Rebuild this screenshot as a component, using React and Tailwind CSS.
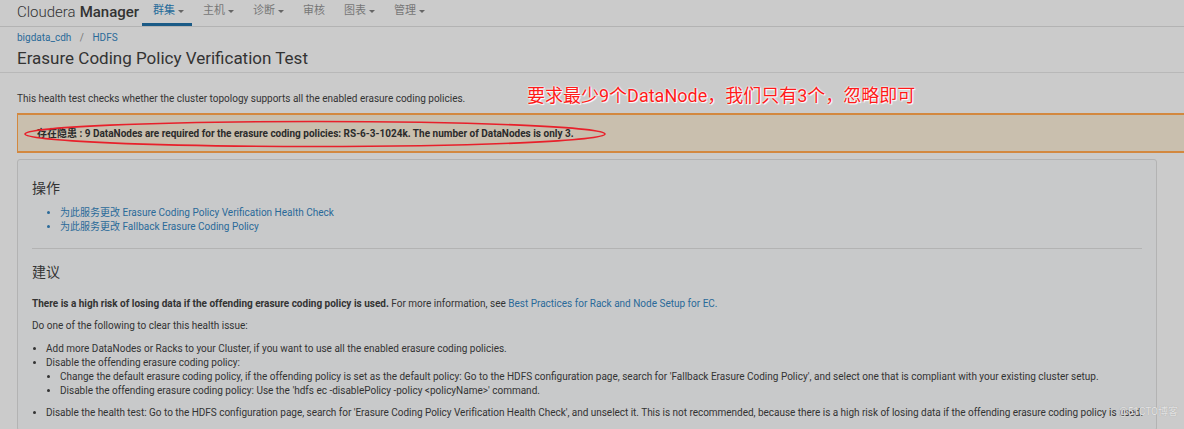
import React from "react";

const navItems = [
  { label: "群集", active: true, caret: true },
  { label: "主机", caret: true },
  { label: "诊断", caret: true },
  { label: "审核" },
  { label: "图表", caret: true },
  { label: "管理", caret: true },
];

const Caret = () => (
  <span className="ml-[3px] inline-block w-0 h-0 border-x-[3px] border-x-transparent border-t-[3px] border-t-[#666] align-middle" />
);

export default function App() {
  return (
    <div className="w-[1184px] h-[429px] overflow-hidden bg-[#cbcbcb] text-[#333] font-['Roboto','Noto_Sans_CJK_SC',sans-serif] text-[10px] relative">
      {/* top nav */}
      <div className="h-[27px] border-b border-[#b3b3b3] flex items-stretch pl-[17px]">
        <div className="w-[125px] flex items-center text-[15px] text-[#333] -mt-[2px]">
          <span className="font-light">Cloudera</span>
          <span className="font-medium ml-[4px]">Manager</span>
        </div>
        <div className="flex items-stretch">
          {navItems.map((n) => (
            <div
              key={n.label}
              className={`flex items-center pl-[11px] pr-[8px] text-[11px] ${n.active ? "text-[#1f6a9a] border-b-[3px] border-[#1a5a86] pt-[3px]" : "text-[#777]"}`}
            >
              <span className="-mt-[3px]">{n.label}</span>
              {n.caret && <span className="-mt-[3px]"><Caret /></span>}
            </div>
          ))}
        </div>
      </div>

      {/* header */}
      <div className="px-[17px] pt-[4px] pb-[2px] border-b border-[#b8b8b8]">
        <div className="text-[10px] text-[#2a6a99] leading-[14px]">
          bigdata_cdh <span className="text-[#777] mx-[6px]">/</span> HDFS
        </div>
        <div className="text-[17px] text-[#333] leading-[24px] mt-[1px]">Erasure Coding Policy Verification Test</div>
      </div>

      {/* description + annotation */}
      <div className="relative px-[17px] pt-[18px] h-[40px]">
        <p>This health test checks whether the cluster topology supports all the enabled erasure coding policies.</p>
        <div className="absolute left-[527px] top-[11px] text-[18px] text-[#ff1a1a] leading-[24px] [text-shadow:0_0_2px_#fff,0_0_2px_#fff,1px_1px_1px_#fff]">
          要求最少9个DataNode，我们只有3个，忽略即可
        </div>
      </div>

      {/* warning box */}
      <div className="relative ml-[17px] h-[40px] bg-[#c9bfae] border-y-[2px] border-l border-[#d3883f] flex items-center pl-[19px]">
        <span className="font-bold text-[#2b2b2b]">存在隐患 : 9 DataNodes are required for the erasure coding policies: RS-6-3-1024k. The number of DataNodes is only 3.</span>
        <svg className="absolute left-[4px] top-[4px]" width="590" height="30" viewBox="0 0 590 30">
          <ellipse cx="293" cy="15" rx="290" ry="12.5" fill="none" stroke="#e8202a" strokeWidth="1.6" />
        </svg>
      </div>

      {/* panel */}
      <div className="ml-[17px] mr-[27px] mt-[6px] border border-[#b3b3b3] rounded-[3px] bg-[#c8c9ca] px-[14px] pt-[19px] pb-[10px]">
        <h3 className="text-[14px] leading-[18px] text-[#333]">操作</h3>
        <ul className="mt-[9px] pl-[28px] list-disc text-[#2a6a99] leading-[14px]">
          <li>为此服务更改 Erasure Coding Policy Verification Health Check</li>
          <li>为此服务更改 Fallback Erasure Coding Policy</li>
        </ul>
        <div className="border-t border-[#b3b3b3] mt-[14px] mb-[14px]" />
        <h3 className="text-[14px] leading-[18px] text-[#333]">建议</h3>
        <p className="mt-[16px] leading-[14px]">
          <span className="font-bold">There is a high risk of losing data if the offending erasure coding policy is used.</span>{" "}
          For more information, see <span className="text-[#2a6a99]">Best Practices for Rack and Node Setup for EC.</span>
        </p>
        <p className="mt-[8px] leading-[14px]">Do one of the following to clear this health issue:</p>
        <ul className="mt-[9px] pl-[14px] list-disc leading-[14px]">
          <li>Add more DataNodes or Racks to your Cluster, if you want to use all the enabled erasure coding policies.</li>
          <li>
            Disable the offending erasure coding policy:
            <ul className="pl-[14px] list-disc">
              <li>Change the default erasure coding policy, if the offending policy is set as the default policy: Go to the HDFS configuration page, search for 'Fallback Erasure Coding Policy', and select one that is compliant with your existing cluster setup.</li>
              <li>Disable the offending erasure coding policy: Use the 'hdfs ec -disablePolicy -policy &lt;policyName&gt;' command.</li>
            </ul>
          </li>
          <li className="mt-[8px] whitespace-nowrap tracking-[-0.03px]">Disable the health test: Go to the HDFS configuration page, search for 'Erasure Coding Policy Verification Health Check', and unselect it. This is not recommended, because there is a high risk of losing data if the offending erasure coding policy is used.</li>
        </ul>
      </div>

      <div className="absolute right-[6px] top-[404px] text-[10px] text-[#e4e4e4] [text-shadow:0_0_1px_#999]">@51CTO博客</div>
    </div>
  );
}
